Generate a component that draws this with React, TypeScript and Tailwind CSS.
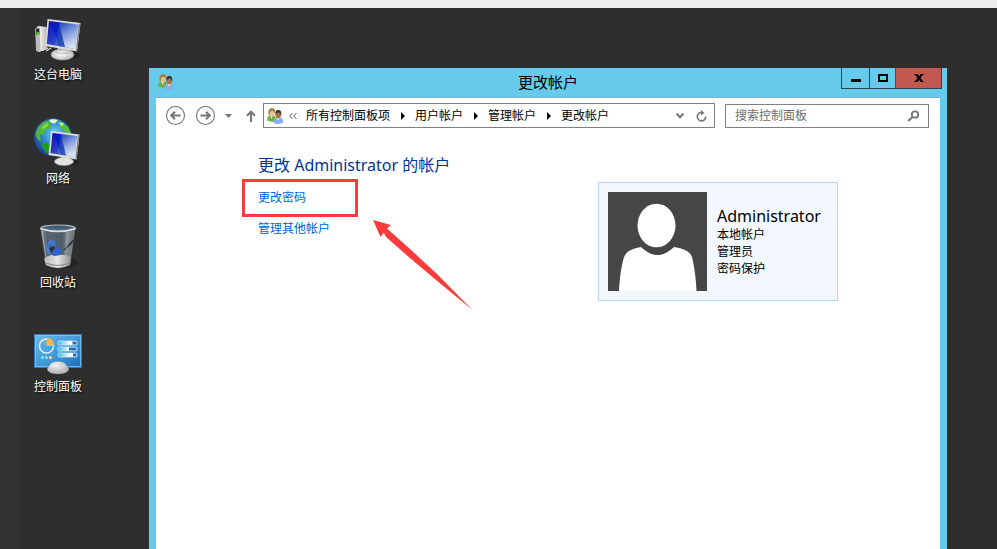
import type { ReactNode } from "react";

function ComputerIcon() {
  return (
    <svg viewBox="0 0 48 48" className="size-12 overflow-visible" aria-hidden="true">
      <defs>
        <linearGradient id="pcScreen" x1="0" y1="0" x2="1" y2="0.2">
          <stop offset="0" stopColor="#0512a0" />
          <stop offset="0.4" stopColor="#0a20d0" />
          <stop offset="0.42" stopColor="#1c3fb4" />
          <stop offset="1" stopColor="#4a72d4" />
        </linearGradient>
        <linearGradient id="pcShine" x1="0" y1="0" x2="0.2" y2="1">
          <stop offset="0" stopColor="#fff" stopOpacity="0" />
          <stop offset="1" stopColor="#fff" stopOpacity="0.8" />
        </linearGradient>
        <linearGradient id="pcCase" x1="0" y1="0" x2="1" y2="0">
          <stop offset="0" stopColor="#8d8d8d" />
          <stop offset="0.4" stopColor="#f2f2f2" />
          <stop offset="1" stopColor="#b5b5b5" />
        </linearGradient>
        <radialGradient id="pcBase" cx="0.45" cy="0.5" r="0.6">
          <stop offset="0" stopColor="#fff" />
          <stop offset="1" stopColor="#b4b4b4" />
        </radialGradient>
      </defs>
      <ellipse cx="37" cy="40" rx="9" ry="4" fill="#000" opacity="0.25" />
      <path d="M1 14 L4 11 L13 12 V34 L5 37 L2 36Z" fill="url(#pcCase)" />
      <path d="M1.5 14 L5.5 13 L6.5 36 L2.5 35.5Z" fill="#b9b9b9" />
      <path d="M2 14 L5.2 13.2 L5.5 19 L2.4 20Z" fill="#2a2a2a" />
      <path d="M2.4 17.5 L5.2 17 V19 L2.6 20Z" fill="#4be414" />
      <path d="M8 35.500 L14 33 M12 36 L17 33" stroke="#ddd" strokeWidth="1.2" />
      <path d="M24 32 L33 34 L34 37 L23 37Z" fill="#b9b9b9" />
      <ellipse cx="28.5" cy="39.5" rx="11.5" ry="5.5" fill="url(#pcBase)" stroke="#9b9b9b" strokeWidth="0.6" />
      <path d="M22 37.5 Q28 40.5 36 37.5" fill="none" stroke="#bbb" strokeWidth="1" />
      <path d="M13.5 4 L46.5 8 L43 36.500 L11 31Z" fill="#dedcd6" />
      <path d="M46.5 8 L44.5 9.5 L42 36.300 L43 36.500Z" fill="#858585" />
      <path d="M15 6 L44 9.5 L41 34 L12.8 29Z" fill="url(#pcScreen)" />
      <path d="M25 7.200 L44 9.5 L41 34 L31 32.200Z" fill="url(#pcShine)" />
      <path d="M15 6 L17 6.200 L25 31.200 L12.8 29Z" fill="url(#pcShine)" opacity="0.2" />
    </svg>
  );
}

function NetworkIcon() {
  return (
    <svg viewBox="0 0 48 48" className="size-12 overflow-visible" aria-hidden="true">
      <defs>
        <radialGradient id="netSea" cx="0.55" cy="0.4" r="0.6">
          <stop offset="0" stopColor="#7cd3f0" />
          <stop offset="0.45" stopColor="#3a94d6" />
          <stop offset="1" stopColor="#1c3f9a" />
        </radialGradient>
        <linearGradient id="netScreen" x1="0" y1="0" x2="1" y2="0.2">
          <stop offset="0" stopColor="#0512a0" />
          <stop offset="0.4" stopColor="#0a20c8" />
          <stop offset="0.42" stopColor="#1c3fb4" />
          <stop offset="1" stopColor="#5478d8" />
        </linearGradient>
        <linearGradient id="netShine" x1="0" y1="0" x2="0.2" y2="1">
          <stop offset="0" stopColor="#fff" stopOpacity="0" />
          <stop offset="1" stopColor="#fff" stopOpacity="0.8" />
        </linearGradient>
      </defs>
      <circle cx="19" cy="18.5" r="19" fill="url(#netSea)" />
      <path d="M1.5 16 Q3 7 10 3 L17 1 L15 4 L18 6 L15 10 L12 10 L10 15 L6 16 L7 22 L4 21Z" fill="#4cb83a" />
      <path d="M7 9 L13 3.500 L15 6 L10 10Z" fill="#86d64a" />
      <path d="M15 1 L19 0 L24 1 L21 4.500 L17 4Z" fill="#e9f2d4" />
      <path d="M26 2 L34 8 L37 15 L32 15 L30 11 L25 8Z" fill="#57c233" />
      <path d="M24 3 L30 4.500 L28 7.500Z" fill="#c8ef9d" />
      <path d="M7 26 L12 23.500 L16 26 V33 L12 34Z" fill="#1f9a22" />
      <ellipse cx="37" cy="43" rx="8" ry="3.5" fill="#000" opacity="0.25" />
      <path d="M27 37 L35 38.5 V42 H26Z" fill="#b9b9b9" />
      <ellipse cx="30" cy="42.5" rx="9.5" ry="4" fill="#e2e2e2" stroke="#aaa" strokeWidth="0.6" />
      <path d="M17 12 L45.500 15.5 L42.500 40.500 L14.500 36Z" fill="#dedcd6" />
      <path d="M45.500 15.5 L43.8 16.5 L41.5 40.300 L42.5 40.500Z" fill="#858585" />
      <path d="M18.5 14 L43 17 L40.5 38 L16.5 34Z" fill="url(#netScreen)" />
      <path d="M27 15 L43 17 L40.5 38 L32 36.600Z" fill="url(#netShine)" />
      <path d="M18.500 14 L20 14.200 L27 35.700 L16.500 34Z" fill="url(#netShine)" opacity="0.2" />
    </svg>
  );
}

function RecycleBinIcon() {
  return (
    <svg viewBox="0 0 48 48" className="size-12 overflow-visible" aria-hidden="true">
      <defs>
        <linearGradient id="binBody" x1="0" y1="0" x2="1" y2="0">
          <stop offset="0" stopColor="#8e959b" />
          <stop offset="0.18" stopColor="#59646f" />
          <stop offset="0.62" stopColor="#4f5e6c" />
          <stop offset="0.78" stopColor="#80888e" />
          <stop offset="1" stopColor="#6c7277" />
        </linearGradient>
        <linearGradient id="binTop" x1="0" y1="0" x2="0" y2="1">
          <stop offset="0" stopColor="#3d5166" />
          <stop offset="1" stopColor="#54718e" />
        </linearGradient>
        <linearGradient id="binBottom" x1="0" y1="0" x2="1" y2="0">
          <stop offset="0" stopColor="#b5b5b5" />
          <stop offset="0.5" stopColor="#e6e6e6" />
          <stop offset="1" stopColor="#929292" />
        </linearGradient>
      </defs>
      <ellipse cx="34" cy="40" rx="10" ry="5" fill="#000" opacity="0.22" />
      <path d="M6.5 5 L12 42 Q24 48 36 42 L41.5 5Z" fill="url(#binBody)" />
      <path d="M10 36 Q15 31 24 32 Q34 31 37 35 L36 42 Q24 48 12 42Z" fill="url(#binBottom)" />
      <path d="M12 40 Q24 45 36 40" fill="none" stroke="#8b8b8b" strokeWidth="1.2" />
      <path d="M13 20 L17 16.500 L21 18 L22.500 22 L19 23.500 L17 21 L14 24Z" fill="#3b76d6" />
      <path d="M11.500 22 L15 25 L17 31 L13 30Z" fill="#4780d8" />
      <path d="M15 25 L21 23 L20 28 L17 30Z" fill="#27323e" />
      <path d="M18 29 L21 25 L25 24 L27.500 29 L25 32.500 L19 33Z" fill="#2e63ce" />
      <path d="M30 27 L40 17" stroke="#2f3942" strokeWidth="1.8" />
      <path d="M8 8 L13 40" stroke="#d4d8db" strokeWidth="0.8" opacity="0.6" />
      <path d="M34 9 L31.500 32" stroke="#c8ccd0" strokeWidth="3" opacity="0.25" />
      <ellipse cx="24" cy="5" rx="17.300" ry="3" fill="url(#binTop)" stroke="#b4b8bb" strokeWidth="1.2" />
      <path d="M6.5 5.500 Q24 11.5 41.5 5.500" fill="none" stroke="#d9dbdd" strokeWidth="1.500" />
    </svg>
  );
}

function ControlPanelIcon() {
  return (
    <svg viewBox="0 0 48 48" className="size-12 overflow-visible" aria-hidden="true">
      <defs>
        <linearGradient id="cpScreen" x1="0" y1="0" x2="1" y2="1">
          <stop offset="0" stopColor="#6fb9e6" />
          <stop offset="0.5" stopColor="#429bd8" />
          <stop offset="1" stopColor="#1b6dbb" />
        </linearGradient>
        <linearGradient id="cpBar" x1="0" y1="0" x2="1" y2="0">
          <stop offset="0" stopColor="#35b6ec" />
          <stop offset="0.6" stopColor="#fff" />
        </linearGradient>
        <radialGradient id="cpBase" cx="0.4" cy="0.3" r="0.8">
          <stop offset="0" stopColor="#f2f2f2" />
          <stop offset="1" stopColor="#a5a5a5" />
        </radialGradient>
      </defs>
      <rect x="0.5" y="7.5" width="47" height="33" fill="url(#cpScreen)" stroke="#2a7cc6" />
      <rect x="1.5" y="8.5" width="45" height="31" fill="none" stroke="#8bcaf0" strokeWidth="0.7" />
      <circle cx="12.5" cy="19" r="7" fill="none" stroke="#e8f5fd" strokeWidth="1.4" />
      <path d="M12.5 19 V11 A8 8 0 0 1 20.5 19Z" fill="#fbb54f" />
      <circle cx="8.5" cy="30.5" r="1.500" fill="#b8f4fb" stroke="#27cde8" />
      <circle cx="12.5" cy="30.5" r="1.500" fill="#b8f4fb" stroke="#27cde8" />
      <circle cx="16.5" cy="30.5" r="1.500" fill="#fff" stroke="#f49426" />
      <rect x="24" y="14" width="19" height="4" rx="1" fill="url(#cpBar)" stroke="#d9f1fc" strokeWidth="0.7" />
      <rect x="38.5" y="14.5" width="4" height="3" fill="#1f70bc" />
      <rect x="24" y="20" width="19" height="4" rx="1" fill="url(#cpBar)" stroke="#d9f1fc" strokeWidth="0.7" />
      <rect x="35" y="20.5" width="7.500" height="3" fill="#1f70bc" />
      <rect x="24" y="26" width="19" height="4" rx="1" fill="url(#cpBar)" stroke="#d9f1fc" strokeWidth="0.7" />
      <rect x="39" y="26.5" width="3.500" height="3" fill="#1f70bc" />
      <path d="M13 42 Q15 40 16 37.5 Q18 34.500 24 34.500 Q30 34.500 32 37.5 Q33 40 35 42 Q34 47 24 47 Q14 47 13 42Z" fill="url(#cpBase)" />
    </svg>
  );
}

function UsersIcon() {
  return (
    <svg viewBox="0 0 16 16" className="size-4 shrink-0 overflow-visible" aria-hidden="true">
      <path d="M0.200 12.500 Q0 8 3 7.5 L7 7.500 Q9 8 9 13 Q4 14.500 0.200 12.500Z" fill="#6fae45" />
      <path d="M3.500 7.5 L4.500 11 L6 7.5Z" fill="#e4efd8" />
      <ellipse cx="5" cy="4.300" rx="2.700" ry="3.600" fill="#e6bf8c" />
      <path d="M1.500 6.500 Q0.700 0 4.800 0 Q9 0 8.200 5.5 Q7.200 2.500 5 2.700 Q3 3 2.600 7.500Z" fill="#9c8244" />
      <path d="M6.500 15 Q6.300 10.500 9.300 9.800 L13.500 9.800 Q16.300 10.500 16.200 14.500 Q12 17 6.500 15Z" fill="#7fb0ea" />
      <path d="M9.500 10 L11 12.500 L13 10Z" fill="#f4f8fc" />
      <ellipse cx="11.3" cy="6.8" rx="2.800" ry="3.600" fill="#a9724a" />
      <path d="M8.300 7 Q7.800 2 11.3 2 Q15 2 14.300 7.500 Q13.500 4.200 11.3 4.500 Q9.300 4.200 8.300 7Z" fill="#33302c" />
    </svg>
  );
}

function CrumbArrow() {
  return (
    <svg viewBox="0 0 25 8" className="h-2 w-[25px] shrink-0" aria-hidden="true">
      <path d="M11 0 L15 4 L11 8Z" fill="#000" />
    </svg>
  );
}

const shortcuts: { label: string; icon: ReactNode }[] = [
  { label: "这台电脑", icon: <ComputerIcon /> },
  { label: "网络", icon: <NetworkIcon /> },
  { label: "回收站", icon: <RecycleBinIcon /> },
  { label: "控制面板", icon: <ControlPanelIcon /> },
];

const crumbs = ["所有控制面板项", "用户帐户", "管理帐户", "更改帐户"];

function TitleBar() {
  return (
    <header className="relative flex h-[30px] items-start justify-between border-b border-[#7fb0c2] bg-[#66cbea]">
      <div className="pt-[6px] pl-[2px]">
        <UsersIcon />
      </div>
      <h1 className="absolute inset-x-0 top-0 text-center text-[15px] leading-7 text-black">
        更改帐户
      </h1>
      <div className="relative -mr-[2px] flex h-[21px] border border-t-0 border-[#2d4550]">
        <button aria-label="最小化" className="flex w-[27px] items-center justify-center">
          <svg viewBox="0 0 10 10" className="size-[10px]">
            <rect y="6" width="10" height="3" />
          </svg>
        </button>
        <button aria-label="最大化" className="flex w-[26px] items-center justify-center border-l border-[#2d4550]">
          <svg viewBox="0 0 10 8" className="h-2 w-[10px]">
            <rect x="1" y="1" width="8" height="6" fill="none" stroke="#000" strokeWidth="2" />
          </svg>
        </button>
        <button aria-label="关闭" className="flex w-[46px] items-center justify-center border-l border-[#6e3f42] bg-[#c15950]">
          <svg viewBox="0 0 10 8" className="h-2 w-[10px]">
            <path d="M2 0 L8 8 M8 0 L2 8" stroke="#000" strokeWidth="2.2" />
            <path d="M0.500 0.5 H3 M7 0.5 H9.500 M0.500 7.5 H3 M7 7.5 H9.500" stroke="#000" />
          </svg>
        </button>
      </div>
    </header>
  );
}

function Toolbar() {
  return (
    <div className="flex items-center pt-[5px] pr-[11px] pl-[10px]">
      <button aria-label="后退">
        <svg viewBox="0 0 20 20" className="size-5" fill="none" stroke="#767676">
          <circle cx="9.500" cy="9.500" r="9" strokeWidth="1.1" />
          <path d="M5.2 9.500 H14.500 M9 5.800 L5.2 9.500 L9 13.200" strokeWidth="2" />
        </svg>
      </button>
      <button aria-label="前进" className="ml-[10px]">
        <svg viewBox="0 0 20 20" className="size-5" fill="none" stroke="#767676">
          <circle cx="9.500" cy="9.500" r="9" strokeWidth="1.1" />
          <path d="M4.500 9.500 H13.800 M10 5.800 L13.800 9.500 L10 13.200" strokeWidth="2" />
        </svg>
      </button>
      <button aria-label="最近浏览的位置" className="ml-[9px]">
        <svg viewBox="0 0 7 4" className="h-1 w-[7px]">
          <path d="M0 0 H7 L3.5 4Z" fill="#767676" />
        </svg>
      </button>
      <button aria-label="向上" className="ml-[14px]">
        <svg viewBox="0 0 10 12" className="h-3 w-[10px]" fill="none" stroke="#767676" strokeWidth="2">
          <path d="M5 12 V1.500 M1 5.700 L5 1.700 L9 5.700" />
        </svg>
      </button>

      <nav className="ml-[7px] flex h-[25px] min-w-0 flex-1 items-center border border-[#808080] pr-[7px] pl-[3px] text-xs">
        <UsersIcon />
        <svg viewBox="0 0 8 6" className="mx-[6px] h-[6px] w-2 shrink-0" fill="none" stroke="#555">
          <path d="M3.5 0 L0.7 3 L3.5 6 M7.5 0 L4.7 3 L7.5 6" />
        </svg>
        <ol className="ml-[3px] flex min-w-0 flex-1 items-center whitespace-nowrap">
          {crumbs.map((crumb, i) => (
            <li key={crumb} className="flex items-center">
              {i > 0 && <CrumbArrow />}
              <a href="#">{crumb}</a>
            </li>
          ))}
        </ol>
        <button aria-label="以前的位置">
          <svg viewBox="0 0 8 6" className="h-[6px] w-2" fill="none" stroke="#767676" strokeWidth="2">
            <path d="M0.7 0.7 L4 4.3 L7.3 0.7" />
          </svg>
        </button>
        <button aria-label="刷新" className="ml-3">
          <svg viewBox="0 0 11 12" className="h-3 w-[11px]" fill="none" stroke="#767676" strokeWidth="1.6">
            <path d="M6 2.500 A4.200 4.200 0 1 0 9.700 6.500" />
            <path d="M5 0 L8.500 2.700 L5 5.500Z" fill="#767676" stroke="none" />
          </svg>
        </button>
      </nav>

      <div className="ml-[10px] flex h-6 w-[204px] items-center border border-[#808080] px-[9px]">
        <input
          type="search"
          aria-label="搜索控制面板"
          placeholder="搜索控制面板"
          className="min-w-0 flex-1 bg-transparent text-xs text-black outline-none placeholder:text-[#6d6d6d]"
        />
        <svg viewBox="0 0 12 12" className="size-3 shrink-0" fill="none" stroke="#767676" aria-hidden="true">
          <circle cx="8" cy="4.500" r="3.200" strokeWidth="1.8" />
          <path d="M5.500 7 L1.200 11" strokeWidth="2.2" />
        </svg>
      </div>
    </div>
  );
}

function AccountCard() {
  return (
    <section className="mt-[29px] flex h-[119px] w-60 shrink-0 gap-[10px] border border-[#b8d6f6] bg-[#f3f8ff] p-[9px]">
      <svg viewBox="0 0 99 99" className="size-[99px] shrink-0" role="img" aria-label="Administrator">
        <rect width="99" height="99" fill="#464646" />
        <ellipse cx="48.5" cy="33.500" rx="19" ry="21.800" fill="#fff" />
        <path
          d="M11 99 C11.5 90 12.5 78 15 69 C16.5 62 19 60 23 58 C27 56 30 55.5 33 55 C39 60.5 44 63 49.5 63 C55 63 60 60.5 66 55 C70 55.5 72 56 77 58 C81 60 83.5 62 84.5 67 C87 78 88 89 88.5 99Z"
          fill="#fff"
        />
      </svg>
      <div className="pt-[15px] text-xs leading-[17px]">
        <h3 className="text-base leading-[19px]">Administrator</h3>
        <p>本地帐户</p>
        <p>管理员</p>
        <p>密码保护</p>
      </div>
    </section>
  );
}

export default function App() {
  return (
    <div
      className="flex min-h-screen flex-col border-t-8 border-[#ededed] bg-[#2e2e2e] text-black"
      style={{ fontFamily: '"Noto Sans", "Noto Sans CJK SC", sans-serif' }}
    >
      <div className="flex flex-1">
        <aside className="flex w-[149px] shrink-0 border-l-[19px] border-[#323232] pt-[7px]">
          <ul className="flex w-[78px] flex-col gap-8">
            {shortcuts.map((s) => (
              <li key={s.label}>
                <button className="flex w-full flex-col items-center text-xs leading-6 text-white [text-shadow:1px_1px_2px_#000]">
                  {s.icon}
                  {s.label}
                </button>
              </li>
            ))}
          </ul>
        </aside>

        <div className="mt-[60px] mr-[50px] flex min-w-0 flex-1 flex-col bg-[#66cbea] px-[7px]">
          <TitleBar />
          <main className="flex-1 bg-white">
            <Toolbar />
            <div className="flex items-start justify-between px-[102px] pt-[25px]">
              <div className="relative">
                <h2 className="text-base leading-6 text-[#003399]">更改 Administrator 的帐户</h2>
                <ul className="mt-[11px] flex flex-col items-start gap-[11px] text-xs leading-5 text-[#0066cc]">
                  <li className="relative">
                    <a href="#">更改密码</a>
                    <span className="pointer-events-none absolute -top-[9px] -left-4 h-[38px] w-[116px] border-3 border-[#fc3c3a]" />
                  </li>
                  <li>
                    <a href="#">管理其他帐户</a>
                  </li>
                </ul>
                <svg
                  viewBox="0 0 100 90"
                  className="pointer-events-none absolute top-[67px] left-[115px] h-[90px] w-[100px]"
                  aria-hidden="true"
                >
                  <path
                    d="M0 0 L18 5 L14 8.500 L37 29 L64 54 L99.5 90 L60 57.500 L34 35.500 L12.500 16.500 Q11.500 12 10 13.500 L7.5 17Z"
                    fill="#fc3c3a"
                  />
                </svg>
              </div>
              <AccountCard />
            </div>
          </main>
        </div>
      </div>
    </div>
  );
}
